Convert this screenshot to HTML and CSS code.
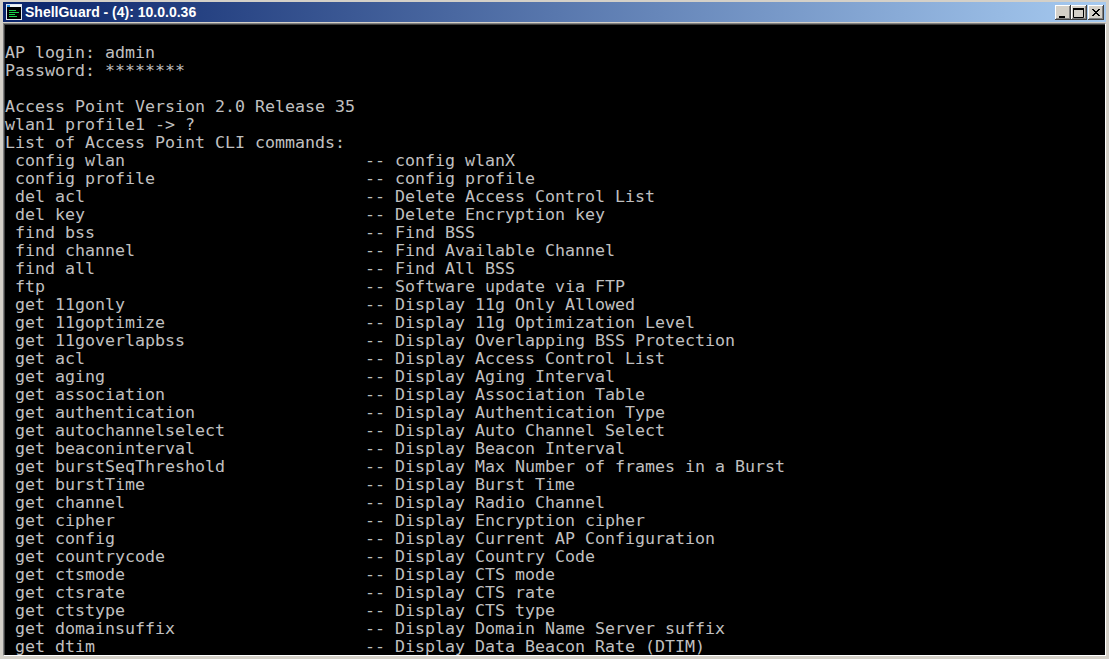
FILE: index.html
```html
<!DOCTYPE html>
<html lang="en">
<head>
<meta charset="utf-8">
<title>ShellGuard - (4): 10.0.0.36</title>
<link rel="stylesheet" href="styles.css">
</head>
<body>
<div class="window">
  <header class="titlebar">
    <svg class="app-icon" width="16" height="16" viewBox="0 0 16 16" aria-hidden="true">
      <rect x="0.5" y="0.5" width="15" height="15" fill="#000" stroke="#dfe6ee"/>
      <rect x="1" y="1" width="14" height="2" fill="#f2f5f8"/>
      <rect x="1" y="1" width="3" height="2" fill="#2a8fe0"/>
      <path d="M3 6.5h7M3 8.5h10M3 10.5h6M3 12.5h8" stroke="#19d24a" stroke-width="1"/>
    </svg>
    <span class="title">ShellGuard - (4): 10.0.0.36</span>
    <div class="controls">
      <button class="ctl"><svg width="16" height="15" viewBox="0 0 16 15"><rect x="4" y="11" width="6" height="2" fill="#000"/></svg></button>
      <button class="ctl"><svg width="16" height="15" viewBox="0 0 16 15"><path d="M2.5 3.5h10v9h-10z" fill="none" stroke="#000"/><rect x="2" y="3" width="11" height="2" fill="#000"/></svg></button>
      <button class="ctl ctl-close"><svg width="16" height="15" viewBox="0 0 16 15"><path d="M4 4l7 7M5 4l7 7M11 4l-7 7M12 4l-7 7" stroke="#000" stroke-width="1" fill="none"/></svg></button>
    </div>
  </header>
  <div class="frame">
<pre class="terminal">

AP login: admin
Password: ********

Access Point Version 2.0 Release 35
wlan1 profile1 -&gt; ?
List of Access Point CLI commands:
 config wlan                        -- config wlanX
 config profile                     -- config profile
 del acl                            -- Delete Access Control List
 del key                            -- Delete Encryption key
 find bss                           -- Find BSS
 find channel                       -- Find Available Channel
 find all                           -- Find All BSS
 ftp                                -- Software update via FTP
 get 11gonly                        -- Display 11g Only Allowed
 get 11goptimize                    -- Display 11g Optimization Level
 get 11goverlapbss                  -- Display Overlapping BSS Protection
 get acl                            -- Display Access Control List
 get aging                          -- Display Aging Interval
 get association                    -- Display Association Table
 get authentication                 -- Display Authentication Type
 get autochannelselect              -- Display Auto Channel Select
 get beaconinterval                 -- Display Beacon Interval
 get burstSeqThreshold              -- Display Max Number of frames in a Burst
 get burstTime                      -- Display Burst Time
 get channel                        -- Display Radio Channel
 get cipher                         -- Display Encryption cipher
 get config                         -- Display Current AP Configuration
 get countrycode                    -- Display Country Code
 get ctsmode                        -- Display CTS mode
 get ctsrate                        -- Display CTS rate
 get ctstype                        -- Display CTS type
 get domainsuffix                   -- Display Domain Name Server suffix
 get dtim                           -- Display Data Beacon Rate (DTIM)
</pre>
  </div>
</div>
</body>
</html>
```
FILE: styles.css
```css
html, body {
  margin: 0;
  height: 100%;
  overflow: hidden;
  background: #d4d0c8;
}
.window {
  height: 659px;
  display: flex;
  flex-direction: column;
  box-sizing: border-box;
  padding-top: 2px;
  background: #d4d0c8;
}
.titlebar {
  height: 20px;
  margin: 0 3px;
  flex: none;
  display: flex;
  align-items: center;
  gap: 3px;
  padding: 0 2px 0 3px;
  background: linear-gradient(90deg, #0a246a 0%, #a6caf0 100%);
}
.app-icon { flex: none; }
.title {
  font: bold 14px "Liberation Sans", Arial, sans-serif;
  color: #fff;
  white-space: nowrap;
}
.controls {
  margin-left: auto;
  display: flex;
}
.ctl {
  width: 16px;
  height: 15px;
  padding: 0;
  border: 0;
  background: #d4d0c8;
  box-shadow: inset -1px -1px 0 #404040, inset 1px 1px 0 #fff, inset -2px -2px 0 #808080;
  display: block;
}
.ctl svg { display: block; }
.ctl-close { margin-left: 1px; }
.frame {
  flex: 1;
  min-height: 0;
  margin: 1px 3px 3px 3px;
  border: 1px solid;
  border-color: #808080 #fff #fff #808080;
  box-shadow: inset 1px 1px 0 #404040;
  background: #000;
  overflow: hidden;
}
.terminal {
  margin: 0;
  padding: 2px 0 0 1px;
  font: 16.61px/18px "DejaVu Sans Mono", "Liberation Mono", monospace;
  color: #c0c0c0;
  white-space: pre;
}
```
